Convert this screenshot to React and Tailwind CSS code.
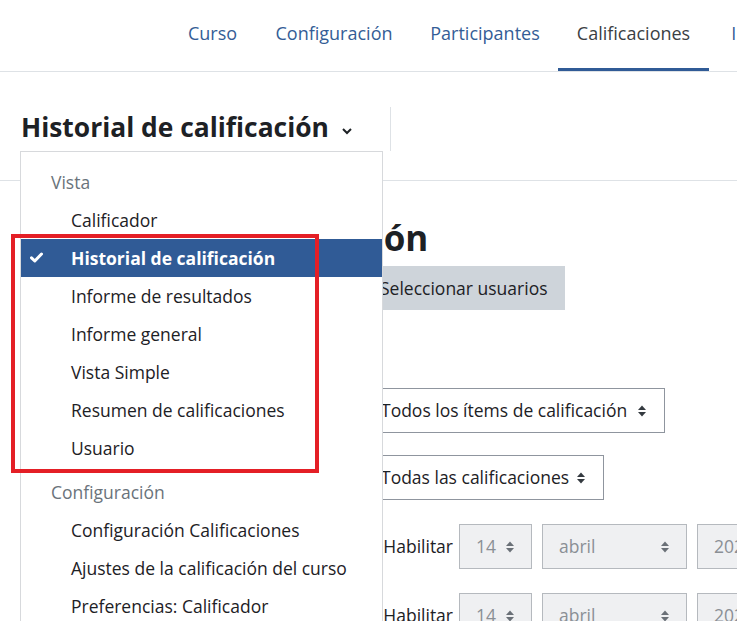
import React from "react";

const Sort = ({ className = "" }) => (
  <svg width="10" height="14" viewBox="0 0 10 14" className={className}>
    <path d="M1 6 L5 1.5 L9 6 Z" fill="currentColor" />
    <path d="M1 8 L5 12.5 L9 8 Z" fill="currentColor" />
  </svg>
);

const Check = () => (
  <svg width="13" height="11" viewBox="0 0 13 11">
    <path d="M1.5 5.8 L4.8 9 L11.5 2" stroke="white" strokeWidth="3" fill="none" strokeLinecap="round" strokeLinejoin="round" />
  </svg>
);

export default function App() {
  const tabs = [
    { t: "Curso", w: "w-[87px]" },
    { t: "Configuración", w: "w-[156px]" },
    { t: "Participantes", w: "w-[146px]" },
    { t: "Calificaciones", w: "w-[151px]", active: true },
    { t: "Informes", w: "w-[120px]" },
  ];
  const vista = [
    "Calificador",
    "Historial de calificación",
    "Informe de resultados",
    "Informe general",
    "Vista Simple",
    "Resumen de calificaciones",
    "Usuario",
  ];
  const conf = [
    "Configuración Calificaciones",
    "Ajustes de la calificación del curso",
    "Preferencias: Calificador",
  ];
  return (
    <div className="relative w-[737px] h-[621px] overflow-hidden bg-white text-[#1d2125] font-['Open_Sans',sans-serif] text-[17.5px]">
      {/* top nav */}
      <nav className="h-[72px] border-b border-[#dee2e6] flex pl-[169px] whitespace-nowrap text-[18px]">
        {tabs.map((x) => (
          <div
            key={x.t}
            className={`${x.w} shrink-0 flex items-center justify-center pb-[1px] border-b-[3px] ${
              x.active ? "border-[#305b96] text-[#3b3f44]" : "border-transparent text-[#345d96]"
            }`}
          >
            {x.t}
          </div>
        ))}
      </nav>

      {/* header with tertiary nav */}
      <div className="h-[109px] border-b border-[#dee2e6] flex items-center">
        <div className="w-[390px] flex items-center pl-[21px] pt-[4px]">
          <span className="text-[26.4px] font-bold text-[#1d2125]">Historial de calificación</span>
          <svg width="12" height="8" viewBox="0 0 12 8" className="ml-[12px] mt-[6px]">
            <path d="M2 2 L6 6 L10 2" stroke="#1d2125" strokeWidth="2" fill="none" />
          </svg>
        </div>
        <div className="w-px h-[44px] bg-[#dee2e6] mt-[6px]" />
      </div>

      {/* main content */}
      <div className="pl-[20px]">
        <h2 className="text-[35px] font-bold leading-none mt-[39px] whitespace-nowrap">Historial de calificación</h2>
        <div className="grid grid-cols-[343px_1fr] mt-[11px]">
          <div />
          <div>
            <button className="h-[44px] px-[17px] bg-[#ced4da] text-[#1d2125] whitespace-nowrap">Seleccionar usuarios</button>
          </div>
        </div>
        <div className="grid grid-cols-[343px_1fr] mt-[78px]">
          <div />
          <div className="w-[302px] h-[45px] border border-[#8f959e] flex items-center justify-between pl-[17px] pr-[17px] whitespace-nowrap">
            <span>Todos los ítems de calificación</span>
            <Sort className="text-[#343a40]" />
          </div>
        </div>
        <div className="grid grid-cols-[343px_1fr] mt-[22px]">
          <div />
          <div className="w-[241px] h-[45px] border border-[#8f959e] flex items-center justify-between pl-[17px] pr-[17px] whitespace-nowrap">
            <span>Todas las calificaciones</span>
            <Sort className="text-[#343a40]" />
          </div>
        </div>
        {[0, 1].map((i) => (
          <div key={i} className="grid grid-cols-[343px_1fr] mt-[24px]">
            <div />
            <div className="flex items-center whitespace-nowrap">
              <div className="w-[90px] shrink-0 flex items-center justify-end">
                <span className="w-[13px] h-[13px] shrink-0 border border-[#8f959e] rounded-[2px] mr-[9px]" />
                <span>Habilitar</span>
              </div>
              <div className="ml-[6px] w-[73px] h-[45px] shrink-0 border border-[#b5b9be] bg-[#eff0f2] text-[#8a8f95] flex items-center justify-between pl-[16px] pr-[16px]">
                <span>14</span>
                <Sort className="text-[#6a7077]" />
              </div>
              <div className="ml-[10px] w-[145px] h-[45px] shrink-0 border border-[#b5b9be] bg-[#eff0f2] text-[#8a8f95] flex items-center justify-between pl-[16px] pr-[16px]">
                <span>abril</span>
                <Sort className="text-[#6a7077]" />
              </div>
              <div className="ml-[10px] w-[100px] h-[45px] shrink-0 border border-[#b5b9be] bg-[#eff0f2] text-[#8a8f95] flex items-center pl-[16px]">
                <span>2023</span>
              </div>
            </div>
          </div>
        ))}
      </div>

      {/* dropdown menu */}
      <div className="absolute left-[20px] top-[151px] w-[363px] h-[480px] bg-white border border-[#d7d9dc] pt-[11px] whitespace-nowrap">
        <div className="h-[38px] flex items-center pl-[30px] text-[#6a737b]">Vista</div>
        {vista.map((v) => {
          const active = v === "Historial de calificación";
          return (
            <div
              key={v}
              className={`h-[38px] flex items-center relative pl-[50px] ${
                active ? "bg-[#305b96] text-white font-bold" : "text-[#1d2125]"
              }`}
            >
              {active && (
                <span className="absolute left-[9px] top-[13px]">
                  <Check />
                </span>
              )}
              {v}
            </div>
          );
        })}
        <div className="h-[38px] flex items-center pl-[30px] text-[#6a737b] mt-[6px]">Configuración</div>
        {conf.map((v) => (
          <div key={v} className="h-[38px] flex items-center pl-[50px] text-[#1d2125]">
            {v}
          </div>
        ))}
      </div>

      {/* red annotation box */}
      <div className="absolute left-[11px] top-[234px] w-[308px] h-[239px] border-[4px] border-[#e41f26]" />
    </div>
  );
}
